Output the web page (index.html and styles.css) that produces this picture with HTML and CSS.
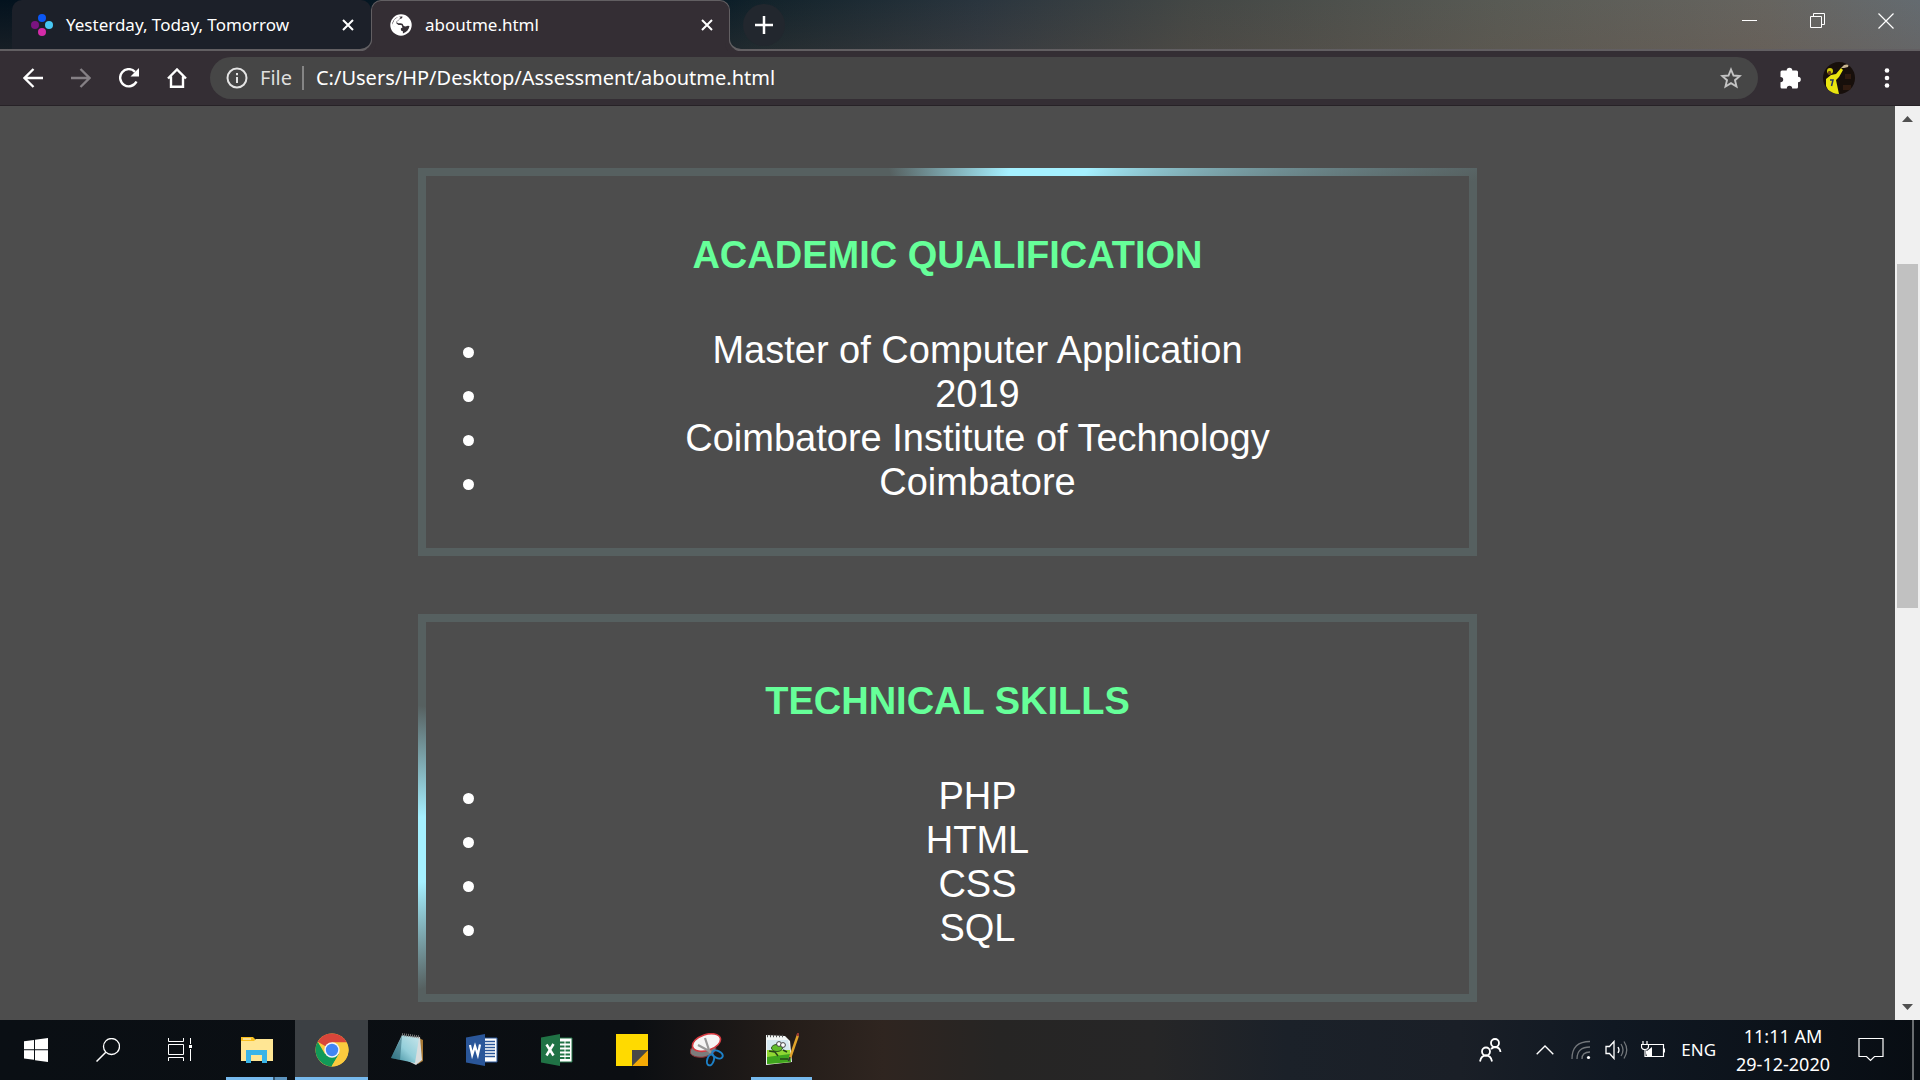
FILE: index.html
```html
<!DOCTYPE html>
<html lang="en">
<head>
<meta charset="utf-8">
<title>aboutme.html</title>
<link rel="stylesheet" href="styles.css">
</head>
<body>
<div class="desktop">
  <header class="tabstrip">
    <div class="tab">
      <svg class="favicon" viewBox="0 0 22 22"><circle cx="11" cy="4" r="4" fill="#0b57f5"/><circle cx="4" cy="11" r="4" fill="#7a1480"/><circle cx="18" cy="11" r="4" fill="#48c8f4"/><circle cx="11" cy="18" r="4" fill="#d42ba8"/></svg>
      <span class="tab-title">Yesterday, Today, Tomorrow</span>
      <button class="tab-close" aria-label="Close tab"><svg width="12" height="12" viewBox="0 0 12 12"><path d="M1 1l10 10M11 1L1 11" stroke="#fff" stroke-width="2"/></svg></button>
    </div>
    <div class="tab tab-active">
      <svg class="favicon" viewBox="0 0 22 22"><circle cx="11" cy="11" r="10.7" fill="#fff"/><path d="M12.500 2.500c0 2-1.500 2.300-3 2.600-.3 1.900-2.200 1.200-2.500 2.700 0 1.300 1.200 1.600 2.700 1.500 2.300-.2 3.300.6 3.600 2 .4 1.400 2.600 1.300 3.900.6 1-.5 1.700-.2 2.300.2-.6 3.600-3 6.300-6.600 7.300v-2.100c-1.600-.2-2.300-1.200-2-2.600.1-1.300-.9-1.800-2.300-1.700H6.500c-2.200-.2-4-1.600-4.200-3.200C2.600 5.700 7 1.700 12.500 2.500z" fill="#342e34"/><path d="M4.500 5.500l4-3 2 1-2 2.500-2 1.500 0 2 2 1.500h3l1 2.500-2 1-4.500-.5L2 11z" fill="#fff"/></svg>
      <span class="tab-title">aboutme.html</span>
      <button class="tab-close" aria-label="Close tab"><svg width="12" height="12" viewBox="0 0 12 12"><path d="M1 1l10 10M11 1L1 11" stroke="#fff" stroke-width="2"/></svg></button>
    </div>
    <button class="new-tab" aria-label="New tab"><svg width="18" height="18" viewBox="0 0 18 18"><path d="M9 0v18M0 9h18" stroke="#fff" stroke-width="2.500"/></svg></button>
    <div class="window-controls">
      <button aria-label="Minimize"><svg width="16" height="16" viewBox="0 0 16 16"><path d="M0 7.500h15" stroke="#fff"/></svg></button>
      <button aria-label="Restore"><svg width="16" height="16" viewBox="0 0 16 16"><path d="M.5 3.500h11v11H.5zM3.500 3.500V.5h11v11h-3" fill="none" stroke="#fff"/></svg></button>
      <button aria-label="Close"><svg width="16" height="16" viewBox="0 0 16 16"><path d="M.5.5l15 15M15.500.5l-15 15" stroke="#fff" stroke-width="1.200"/></svg></button>
    </div>
  </header>

  <nav class="toolbar">
    <button aria-label="Back"><svg width="20" height="20" viewBox="0 0 20 20"><path d="M20 10H2M10.500 1L1.500 10l9 9" fill="none" stroke="#fff" stroke-width="2.300"/></svg></button>
    <button aria-label="Forward"><svg width="20" height="20" viewBox="0 0 20 20"><path d="M0 10h18M9.500 1l9 9-9 9" fill="none" stroke="#858085" stroke-width="2.300"/></svg></button>
    <button aria-label="Reload"><svg width="20" height="20" viewBox="0 0 20 20"><path d="M17.500 13.500A8.600 8.600 0 1 1 16 3.800" fill="none" stroke="#fff" stroke-width="2.400"/><path d="M20 0v8.500h-8.500z" fill="#fff"/></svg></button>
    <button aria-label="Home"><svg width="20" height="20" viewBox="0 0 20 20"><path d="M1 10.500L10 1.500l9 9M4 8.500v10.300h12V8.500" fill="none" stroke="#fff" stroke-width="2.400"/></svg></button>
    <div class="omnibox">
      <svg width="22" height="22" viewBox="0 0 22 22"><circle cx="11" cy="11" r="9.500" fill="none" stroke="#e4e4e4" stroke-width="2"/><path d="M11 10v6M11 6v2.200" stroke="#e4e4e4" stroke-width="2"/></svg>
      <label class="scheme" for="address">File</label>
      <input id="address" type="text" value="C:/Users/HP/Desktop/Assessment/aboutme.html">
      <button aria-label="Bookmark this page"><svg width="22" height="22" viewBox="0 0 22 22"><path d="M11 2.500l2.500 6 6.300.500-4.800 4.200 1.500 6.300-5.500-3.400-5.500 3.400L7 13.200 2.200 9l6.300-.5z" fill="none" stroke="#c4c4c4" stroke-width="1.900"/></svg></button>
    </div>
    <button aria-label="Extensions"><svg width="22" height="22" viewBox="0 0 22 22"><path d="M2 3.500h4.700a2.800 2.800 0 1 1 5.600 0H16.500q1.500 0 1.500 1.500V9.700a2.800 2.800 0 1 1 0 5.600V20q0 1.500-1.500 1.500h-4.300a2.700 2.700 0 1 0-5.400 0H2Q.5 21.500.5 20v-4.700a2.700 2.700 0 1 0 0-5.400V5Q.5 3.500 2 3.500z" fill="#fff"/></svg></button>
    <button aria-label="Profile"><svg width="32" height="32" viewBox="0 0 32 32"><defs><clipPath id="avatar"><circle cx="16" cy="16" r="16"/></clipPath></defs><g clip-path="url(#avatar)"><path d="M0 0h32v32H0z" fill="#170f0b"/><path d="M22 12h6v5h-6zM20 23h8v5h-8z" fill="#301b10"/><path d="M3 17l5-4 5-1 5-6 2 2-4 7-3 3 3 14H7L3 24z" fill="#e9e510"/><circle cx="7" cy="9" r="3" fill="#d0ca0a"/><path d="M4.500 12q2 2 4 0l-1-3h-2z" fill="#6a4017"/><path d="M18 6l3-3 5-1-1 3-4 1z" fill="#c8b590"/><path d="M7 18h3l-1.500 6" fill="none" stroke="#263566" stroke-width="1.500"/></g></svg></button>
    <button aria-label="Menu"><svg width="6" height="20" viewBox="0 0 6 20"><g fill="#fff"><circle cx="3" cy="2.500" r="2.300"/><circle cx="3" cy="10" r="2.300"/><circle cx="3" cy="17.500" r="2.300"/></g></svg></button>
  </nav>

  <div class="viewport">
    <main class="page">
      <section class="card card-academic">
        <h2>ACADEMIC QUALIFICATION</h2>
        <ul>
          <li>Master of Computer Application</li>
          <li>2019</li>
          <li>Coimbatore Institute of Technology</li>
          <li>Coimbatore</li>
        </ul>
      </section>
      <section class="card card-skills">
        <h2>TECHNICAL SKILLS</h2>
        <ul>
          <li>PHP</li>
          <li>HTML</li>
          <li>CSS</li>
          <li>SQL</li>
        </ul>
      </section>
    </main>
    <div class="scrollbar">
      <svg width="11" height="6" viewBox="0 0 11 6"><path d="M0 6L5.500 0 11 6z" fill="#505050"/></svg>
      <div class="track"><div class="thumb"></div></div>
      <svg width="11" height="6" viewBox="0 0 11 6"><path d="M0 0L5.500 6 11 0z" fill="#505050"/></svg>
    </div>
  </div>

  <footer class="taskbar">
    <div class="launchers">
      <button class="system" aria-label="Start"><svg width="24" height="24" viewBox="0 0 24 24"><path d="M0 3.300L10 2v9.300H0zM11 1.800L24 0v11.300H11zM0 12.300h10v9.400L0 20.500zM11 12.300h13V24l-13-1.800z" fill="#fff"/></svg></button>
      <button class="system" aria-label="Search"><svg width="24" height="24" viewBox="0 0 24 24"><circle cx="15.500" cy="8.500" r="8" fill="none" stroke="#fff" stroke-width="1.300"/><path d="M9.800 14.200L.5 23.500" stroke="#fff" stroke-width="1.500"/></svg></button>
      <button class="system" aria-label="Task view"><svg width="24" height="24" viewBox="0 0 24 24"><path d="M.5 0v3.500h15V0M.5 6.500h15v10H.5zM.5 23v-3.500h15V23M22.500 0v6M22.500 11v12" fill="none" stroke="#fff"/><path d="M21 7h3v3h-3z" fill="#fff"/></svg></button>
      <div class="apps">
        <button class="app app-open app-stacked" aria-label="File Explorer"><svg width="32" height="32" viewBox="0 0 32 32"><path d="M0 5V3h12l3 3-2 3H0z" fill="#f8bf20"/><path d="M0 7h13l2-2h17v22H0z" fill="#ffe694"/><path d="M2 5h8" stroke="#fff"/><path d="M5 16h21v13h-5v-8H10v8H5z" fill="#39b4e8"/></svg></button>
        <button class="app app-open app-current" aria-label="Google Chrome"><svg width="34" height="34" viewBox="0 0 34 34"><circle cx="17" cy="17" r="16.500" fill="#fccb3e"/><path d="M17 17L2.700 8.800A16.500 16.500 0 0 1 31.800 9.500H17z" fill="#d9453a"/><path d="M17 17l7 4-7.500 12.500A16.500 16.500 0 0 1 2.700 8.800L10 21z" fill="#119a58"/><path d="M24 21l-7.500 12.500A16.500 16.500 0 0 0 31.800 9.500H17z" fill="#fccb3e"/><circle cx="17" cy="17" r="7.700" fill="#f5f5f5"/><circle cx="17" cy="17" r="6.200" fill="#4285f4"/></svg></button>
        <button class="app" aria-label="Notepad"><svg width="34" height="34" viewBox="0 0 34 34"><defs><linearGradient id="pad" x1="0" y1="1" x2="1" y2="0"><stop offset="0" stop-color="#2f7f91"/><stop offset=".5" stop-color="#94cfda"/><stop offset="1" stop-color="#c8e6eb"/></linearGradient></defs><path d="M29 5l4 2v21l-5 3z" fill="#a67834"/><path d="M12 3l18 1 2 23-6 5-8-4z" fill="#d9dddd"/><path d="M12 2l17 3-4 25L1 25z" fill="url(#pad)"/><path d="M12 3L1 25l9 2z" fill="#24596a" opacity=".5"/><path d="M12 1.500l18 2.500" stroke="#777" stroke-width="3" stroke-dasharray="1 1"/></svg></button>
        <button class="app" aria-label="Word"><svg width="32" height="32" viewBox="0 0 32 32"><path d="M17 4h14v24H17z" fill="#fff" stroke="#2a5699"/><path d="M19 7.500h10M19 10.500h10M19 13.500h10M19 16.500h10M19 19.500h10M19 22.500h10" stroke="#2a5699" stroke-width="1.300"/><path d="M0 3.500L19 0v32L0 28.500z" fill="#2a5699"/><path d="M4 11l2.200 10L9 12l2.800 9L14 10.500" fill="none" stroke="#fff" stroke-width="2.200"/></svg></button>
        <button class="app" aria-label="Excel"><svg width="32" height="32" viewBox="0 0 32 32"><path d="M17 4h14v24H17z" fill="#fff" stroke="#207245"/><path d="M19 8.500h10M19 12.500h10M19 16.500h10M19 20.500h10M19 24h10" stroke="#207245" stroke-width="2.200"/><path d="M24 5v22" stroke="#fff"/><path d="M0 3.500L19 0v32L0 28.500z" fill="#207245"/><path d="M5.500 10.500l7 11M12.500 10l-7 11.500" stroke="#fff" stroke-width="2.500"/></svg></button>
        <button class="app" aria-label="Sticky Notes"><svg width="32" height="32" viewBox="0 0 32 32"><path d="M0 0h32v16L16 32H0z" fill="#ffda00"/><path d="M16 32h16V16z" fill="#f5aa05"/><path d="M16 16h16L16 32z" fill="#474747"/></svg></button>
        <button class="app" aria-label="Snipping Tool"><svg width="34" height="34" viewBox="0 0 34 34"><ellipse cx="13" cy="17" rx="13" ry="7" transform="rotate(-10 13 17)" fill="#7c7c7c" stroke="#8b3036"/><ellipse cx="16.500" cy="9.500" rx="14.500" ry="8" transform="rotate(-18 16.500 9.500)" fill="#f5f5f5" stroke="#d43a40" stroke-width="1.600"/><path d="M15 5l5 15M8 12l13 7" stroke="#999" stroke-width="2.200"/><ellipse cx="27.500" cy="21.500" rx="5.500" ry="3.500" transform="rotate(25 27.500 21.500)" fill="none" stroke="#1d81c8" stroke-width="2"/><ellipse cx="20.500" cy="27" rx="5.500" ry="3.300" transform="rotate(-72 20.500 27)" fill="none" stroke="#1d81c8" stroke-width="2"/></svg></button>
        <button class="app app-open" aria-label="Notepad++"><svg width="34" height="34" viewBox="0 0 34 34"><path d="M1 2l19 1 5 5 2 21-26 3z" fill="#f2f6f4"/><path d="M2 7h21l2 10H2z" fill="#d5e8f0"/><path d="M2 17h23l1 12-24 2z" fill="#8fd733"/><path d="M2 24l23-3 1 8-24 2z" fill="#3fa51e"/><path d="M2 3h18" stroke="#555" stroke-width="2.500" stroke-dasharray="1 2"/><ellipse cx="12" cy="15" rx="5.500" ry="3.500" fill="#61bd2b" stroke="#31571c"/><circle cx="14" cy="11" r="2.400" fill="#fff" stroke="#444"/><circle cx="18" cy="12" r="2.400" fill="#fff" stroke="#444"/><path d="M4 18l6 1 3 4M18 17l4 2M15 26h8" fill="none" stroke="#26441a" stroke-width="1.500"/><path d="M33 2l-8 23" stroke="#e0a32b" stroke-width="2.500"/><path d="M33.500 0l-1 3" stroke="#9c3b32" stroke-width="2.500"/><path d="M25 24l-1.500 4" stroke="#333" stroke-width="1.500"/></svg></button>
      </div>
    </div>
    <div class="tray">
      <button class="people" aria-label="People"><svg width="24" height="24" viewBox="0 0 24 24"><g fill="none" stroke="#fff" stroke-width="1.800"><circle cx="16" cy="5" r="4"/><circle cx="7" cy="13.500" r="4"/><path d="M1 23.500q1-6 6-6t6 6M12 11q2-2 4.500-2 4.500.500 5 5"/></g></svg></button>
      <button aria-label="Show hidden icons"><svg width="18" height="10" viewBox="0 0 18 10"><path d="M.7 9.300L9 1l8.300 8.300" fill="none" stroke="#fff" stroke-width="1.400"/></svg></button>
      <button aria-label="Network"><svg width="20" height="20" viewBox="0 0 20 20"><g fill="none" stroke="#73777b" stroke-width="1.300"><path d="M1 19Q1 1.500 19 1.500M6 19Q6 7 19 7M11 19q0-7 8-7"/></g><circle cx="17.500" cy="17.500" r="1.600" fill="#fff"/></svg></button>
      <button aria-label="Volume"><svg width="24" height="20" viewBox="0 0 24 20"><path d="M1 6.500h3.500L9 1.500v17l-4.500-5H1z" fill="none" stroke="#fff" stroke-width="1.300"/><path d="M13 7q2 3 0 6" fill="none" stroke="#fff" stroke-width="1.300"/><path d="M16 4q4 6 0 12M19 1.500q5.500 8.500 0 17" fill="none" stroke="#73777b" stroke-width="1.300"/></svg></button>
      <button aria-label="Battery"><svg width="24" height="20" viewBox="0 0 24 20"><path d="M8 4.500h14.500v12h-17v-6M23.500 8.500v4" fill="none" stroke="#fff" stroke-width="1.200"/><path d="M6 11l5-4v9H6z" fill="#fff"/><path d="M2 1v3M6 1v3M.500 4.500h7v2q0 3-3.500 3t-3.500-3zM4 10v6.500h2" fill="#10171f" stroke="#fff" stroke-width="1.200"/></svg></button>
      <span class="language">ENG</span>
      <div class="clock"><span>11:11 AM</span><span>29-12-2020</span></div>
      <button class="notifications" aria-label="Notifications"><svg width="26" height="26" viewBox="0 0 26 26"><path d="M1 1.500h24v18h-8.500l-4 4-4-4H1z" fill="none" stroke="#fff" stroke-width="1.200"/></svg></button>
    </div>
  </footer>
</div>
</body>
</html>
```
FILE: styles.css
```css
* { box-sizing: border-box; }

body {
  margin: 0;
  color: #fff;
  background: #4d4d4d;
  font-family: "Noto Sans", "Open Sans", sans-serif;
}

button {
  display: flex;
  align-items: center;
  justify-content: center;
  flex: none;
  padding: 0;
  border: 0;
  background: none;
}

svg { display: block; flex: none; }

.desktop {
  display: flex;
  flex-direction: column;
  height: 100vh;
  overflow: hidden;
}

/* Tab strip */
.tabstrip {
  display: flex;
  flex: none;
  height: 51px;
  padding-left: 12px;
  overflow: hidden;
  background:
    linear-gradient(#62676900, #6a514433),
    linear-gradient(90deg, #03121e 0%, #061a26 36%, #13232b 40%, #2a353e 51%, #434745 62%, #585a54 78%, #66645f 92%, #646b70 100%);
  box-shadow: inset 0 -2px #625f62;
}

.tab {
  display: flex;
  align-items: center;
  width: 359px;
  height: 49px;
  padding: 0 17px 0 19px;
  border-radius: 10px 10px 0 0;
  background: #1c2029;
}

.tab-active {
  position: relative;
  height: 51px;
  padding: 0 16px 2px 18px;
  border: 1px solid #625f62;
  border-bottom: 0;
  background: #342e34;
}

/* Curved feet that join the active tab to the toolbar */
.tab-active::before,
.tab-active::after {
  content: "";
  position: absolute;
  bottom: 0;
  width: 12px;
  height: 12px;
  border-bottom: 2px solid #625f62;
}

.tab-active::before {
  right: 100%;
  border-right: 1px solid #625f62;
  border-bottom-right-radius: 12px;
  box-shadow: 4px 4px #342e34;
}

.tab-active::after {
  left: 100%;
  border-left: 1px solid #625f62;
  border-bottom-left-radius: 12px;
  box-shadow: -4px 4px #342e34;
}

.favicon { width: 22px; height: 22px; }

.tab-title {
  flex: 1;
  margin-left: 13px;
  font-size: 17px;
  line-height: 24px;
  white-space: nowrap;
}

.new-tab {
  width: 42px;
  height: 42px;
  margin: 4px 0 0 13px;
  border-radius: 50%;
  background: #22272e;
}

.window-controls { display: flex; margin-left: auto; }
.window-controls button { width: 68px; height: 42px; }

/* Toolbar */
.toolbar {
  display: flex;
  align-items: center;
  flex: none;
  height: 55px;
  padding: 0 9px;
  border-bottom: 1px solid #272227;
  background: #342e34;
}

.toolbar > button { width: 48px; height: 48px; }

.toolbar .omnibox {
  display: flex;
  align-items: center;
  flex: 1;
  height: 42px;
  margin: 0 9px;
  padding: 0 16px;
  border-radius: 21px;
  background: #464646;
}

.scheme {
  margin-left: 12px;
  padding-right: 10px;
  border-right: 2px solid #858585;
  color: #dedede;
  font-size: 20px;
  line-height: 24px;
}

.omnibox input {
  flex: 1;
  min-width: 0;
  padding: 0 12px;
  border: 0;
  outline: 0;
  color: #fff;
  background: none;
  font: 20px/28px "Noto Sans", "Open Sans", sans-serif;
}

/* Browser page */
.viewport {
  display: flex;
  flex: 1;
  min-height: 0;
}

.page {
  display: flex;
  flex: 1;
  flex-direction: column;
  align-items: center;
  gap: 58px;
  padding: 62px 32px 0;
  overflow: hidden;
  background: #4d4d4d;
  font-family: "Liberation Sans", Arial, sans-serif;
  font-size: 38px;
  line-height: 44px;
  text-align: center;
}

.card {
  flex: none;
  width: 100%;
  max-width: 1059px;
  padding: 57px 6px 44px;
  border: 8px solid #566060;
}

.card-academic {
  border-image: conic-gradient(from -17deg, #566060 0deg, #a5f0ff 35deg, #a5f0ff 53deg, #566060 88deg) 8;
}

.card-skills {
  border-image: conic-gradient(from 251deg, #566060 0deg, #a5f0ff 11deg, #a5f0ff 18deg, #566060 30deg) 8;
}

.card h2 {
  margin: 0 0 51px;
  color: #66ff99;
  font-size: 38px;
}

.card ul { margin: 0; padding: 0 0 0 60px; }

.scrollbar {
  display: flex;
  flex-direction: column;
  align-items: center;
  flex: none;
  width: 25px;
  padding: 10px 0;
  background: #f0f0f0;
}

.track {
  display: grid;
  grid-template-rows: 142fr 344fr 396fr;
  flex: 1;
  width: 21px;
}

.thumb { grid-row: 2; background: #c1c1c1; }

/* Taskbar */
.taskbar {
  display: flex;
  justify-content: space-between;
  flex: none;
  height: 60px;
  background: linear-gradient(90deg, #0a0f14 0%, #0b0e12 33%, #241d19 41%, #2f2520 46%, #262524 52%, #262627 60%, #1b2129 67%, #1a1f27 76%, #101822 84%, #080d13 100%);
}

.launchers, .apps { display: flex; }

.apps { gap: 2px; margin-left: 4px; }

.system { width: 72px; }

.app {
  width: 73px;
  border: solid transparent;
  border-width: 3px 0;
}

.app-open {
  background: linear-gradient(#76b9ed, #76b9ed) center bottom / 61px 3px no-repeat border-box;
}

.app-stacked {
  background-image: linear-gradient(90deg, #76b9ed 47px, #35546c 47px, #35546c 49px, #5c93bd 49px);
}

.app-current {
  background-color: #3c4044;
  background-size: 100% 3px;
}

.tray {
  display: flex;
  align-items: center;
  margin-right: 6px;
  border-right: 2px solid #686c70;
}

.tray button { width: 36px; height: 60px; }
.tray .people { width: 72px; }
.tray .notifications { width: 82px; }

.language {
  padding: 0 20px 0 10px;
  font-size: 17px;
  line-height: 28px;
}

.clock {
  display: flex;
  flex-direction: column;
  align-items: center;
  font-size: 18px;
  line-height: 28px;
}
```
